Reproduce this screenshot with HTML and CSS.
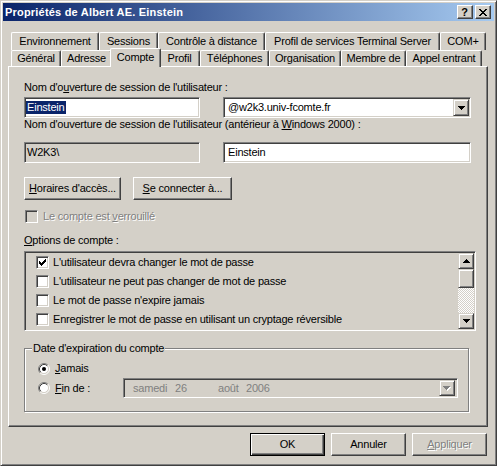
FILE: index.html
```html
<!DOCTYPE html>
<html lang="fr">
<head>
<meta charset="utf-8">
<title>Propriétés de Albert AE. Einstein</title>
<link rel="stylesheet" href="styles.css">
</head>
<body>
<div class="window">
  <div class="titlebar">
    <div class="title">Propriétés de Albert AE. Einstein</div>
    <div class="capbtns">
      <div class="capbtn help">?</div>
      <div class="capbtn close">
        <svg width="8" height="7" viewBox="0 0 8 7" shape-rendering="crispEdges"><path d="M0 0h2v1h-2z M6 0h2v1h-2z M1 1h2v1h-2z M5 1h2v1h-2z M2 2h4v1h-4z M3 3h2v1h-2z M2 4h4v1h-4z M1 5h2v1h-2z M5 5h2v1h-2z M0 6h2v1h-2z M6 6h2v1h-2z" fill="#000"/></svg>
      </div>
    </div>
  </div>

  <div class="client">
    <div class="tabs">
      <div class="tabrow back">
        <div class="tab t-env">Environnement</div>
        <div class="tab t-ses">Sessions</div>
        <div class="tab t-ctl">Contrôle à distance</div>
        <div class="tab t-pts">Profil de services Terminal Server</div>
        <div class="tab t-com">COM+</div>
      </div>
      <div class="tabrow front">
        <div class="tab t-gen">Général</div>
        <div class="tab t-adr">Adresse</div>
        <div class="tab t-cpt sel">Compte</div>
        <div class="tab t-pro">Profil</div>
        <div class="tab t-tel">Téléphones</div>
        <div class="tab t-org">Organisation</div>
        <div class="tab t-mem">Membre de</div>
        <div class="tab t-app">Appel entrant</div>
      </div>
    </div>

    <div class="panel">
      <div class="label l1">Nom d'o<u>u</u>verture de session de l'utilisateur :</div>
      <div class="fieldrow r1">
        <div class="edit short"><span class="hl">Einstein</span></div>
        <div class="edit long combo">
          <span class="val">@w2k3.univ-fcomte.fr</span>
          <span class="ddbtn">
            <svg width="7" height="4" viewBox="0 0 7 4" shape-rendering="crispEdges"><path d="M0 0h7v1h-1v1h-1v1h-1v1h-1v-1h-1v-1h-1v-1h-1z" fill="#000"/></svg>
          </span>
        </div>
      </div>
      <div class="label l2">Nom d'ouverture de session de l'utilisateur (antérieur à <u>W</u>indows 2000) :</div>
      <div class="fieldrow r2">
        <div class="edit short ro">W2K3\</div>
        <div class="edit long">Einstein</div>
      </div>

      <div class="btnrow">
        <div class="btn b-hor"><span><u>H</u>oraires d'accès...</span></div>
        <div class="btn b-con"><span><u>S</u>e connecter à...</span></div>
      </div>

      <div class="check locked">
        <span class="cb off"></span>
        <span class="dis">Le compte est <u>v</u>errouillé</span>
      </div>

      <div class="label l3"><u>O</u>ptions de compte :</div>

      <div class="listbox">
        <div class="items">
          <div class="item">
            <span class="cb"><svg width="7" height="7" viewBox="0 0 7 7" shape-rendering="crispEdges"><path d="M0 2h1v3h-1z M1 3h1v3h-1z M2 4h1v3h-1z M3 3h1v3h-1z M4 2h1v3h-1z M5 1h1v3h-1z M6 0h1v3h-1z" fill="#000"/></svg></span>
            <span>L'utilisateur devra changer le mot de passe</span>
          </div>
          <div class="item"><span class="cb"></span><span>L'utilisateur ne peut pas changer de mot de passe</span></div>
          <div class="item"><span class="cb"></span><span>Le mot de passe n'expire jamais</span></div>
          <div class="item"><span class="cb"></span><span>Enregistrer le mot de passe en utilisant un cryptage réversible</span></div>
        </div>
        <div class="vscroll">
          <div class="sbtn">
            <svg width="7" height="4" viewBox="0 0 7 4" shape-rendering="crispEdges"><path d="M3 0h1v1h1v1h1v1h1v1h-7v-1h1v-1h1v-1h1z" fill="#000"/></svg>
          </div>
          <div class="thumb"></div>
          <div class="track"></div>
          <div class="sbtn">
            <svg width="7" height="4" viewBox="0 0 7 4" shape-rendering="crispEdges"><path d="M0 0h7v1h-1v1h-1v1h-1v1h-1v-1h-1v-1h-1v-1h-1z" fill="#000"/></svg>
          </div>
        </div>
      </div>

      <fieldset class="group">
        <legend>Date d'expiration du compte</legend>
        <div class="radiorow first">
          <svg class="radio" width="12" height="12" viewBox="0 0 12 12">
            <circle cx="6" cy="6" r="4.5" fill="#fff"/>
            <path d="M2.11 9.89A5.5 5.5 0 0 1 9.89 2.11" fill="none" stroke="#808080"/>
            <path d="M9.89 2.11A5.5 5.5 0 0 1 2.11 9.89" fill="none" stroke="#fff"/>
            <path d="M2.82 9.18A4.5 4.5 0 0 1 9.18 2.82" fill="none" stroke="#404040"/>
            <path d="M9.18 2.82A4.5 4.5 0 0 1 2.82 9.18" fill="none" stroke="#D4D0C8"/>
            <circle cx="6" cy="6" r="2" fill="#000"/>
          </svg>
          <span><u>J</u>amais</span>
        </div>
        <div class="radiorow second">
          <svg class="radio" width="12" height="12" viewBox="0 0 12 12">
            <circle cx="6" cy="6" r="4.5" fill="#fff"/>
            <path d="M2.11 9.89A5.5 5.5 0 0 1 9.89 2.11" fill="none" stroke="#808080"/>
            <path d="M9.89 2.11A5.5 5.5 0 0 1 2.11 9.89" fill="none" stroke="#fff"/>
            <path d="M2.82 9.18A4.5 4.5 0 0 1 9.18 2.82" fill="none" stroke="#404040"/>
            <path d="M9.18 2.82A4.5 4.5 0 0 1 2.82 9.18" fill="none" stroke="#D4D0C8"/>
          </svg>
          <span class="finde"><u>F</u>in de :</span>
          <div class="datepick">
            <span class="d-day">samedi</span>
            <span class="d-num">26</span>
            <span class="d-mon">août</span>
            <span class="d-yr">2006</span>
            <span class="ddbtn dd-dis">
              <svg width="8" height="5" viewBox="0 0 8 5" shape-rendering="crispEdges"><path d="M1 1h7v1h-1v1h-1v1h-1v1h-1v-1h-1v-1h-1v-1h-1z" fill="#fff"/><path d="M0 0h7v1h-1v1h-1v1h-1v1h-1v-1h-1v-1h-1v-1h-1z" fill="#808080"/></svg>
            </span>
          </div>
        </div>
      </fieldset>
    </div>

    <div class="dlgbtns">
      <div class="btn dlg default">OK</div>
      <div class="btn dlg">Annuler</div>
      <div class="btn dlg"><span class="dis"><u>A</u>ppliquer</span></div>
    </div>
  </div>
</div>
</body>
</html>
```

FILE: styles.css
```css
* { box-sizing: border-box; }

html, body {
  margin: 0;
  padding: 0;
}

body {
  width: 497px;
  height: 466px;
  overflow: hidden;
  background: #D4D0C8;
  font-family: "Liberation Sans", Arial, sans-serif;
  font-size: 11px;
  line-height: 13px;
  letter-spacing: -0.2px;
  color: #000;
}

u { text-decoration: underline; text-underline-offset: 1px; }

/* ---------- window frame ---------- */
.window {
  width: 497px;
  height: 466px;
  border: 1px solid;
  border-color: #D4D0C8 #404040 #404040 #D4D0C8;
  box-shadow: inset 1px 1px 0 #fff, inset -1px -1px 0 #808080;
  padding: 2px;
  display: flex;
  flex-direction: column;
}

.titlebar {
  height: 18px;
  flex: none;
  display: flex;
  align-items: center;
  padding: 0 3px 0 2px;
  background: linear-gradient(to right, #0A246A, #A6CAF0);
  color: #fff;
  font-weight: bold;
  letter-spacing: 0.2px;
}

.title { flex: 1; white-space: nowrap; }

.capbtns { display: flex; gap: 2px; }

.capbtn {
  width: 16px;
  height: 14px;
  background: #D4D0C8;
  border: 1px solid;
  border-color: #fff #404040 #404040 #fff;
  box-shadow: inset -1px -1px 0 #808080;
  display: flex;
  align-items: center;
  justify-content: center;
  color: #000;
  font-weight: bold;
  font-size: 11px;
  line-height: 11px;
  letter-spacing: 0;
}

.capbtn.help { padding: 0 1px 0 0; }
.capbtn.close svg { display: block; margin-left: -1px; }

/* ---------- client area ---------- */
.client {
  flex: 1;
  display: flex;
  flex-direction: column;
  padding: 11px 0 0 5px;
}

.tabs {
  position: relative;
  z-index: 1;
  margin-left: 3px;
  width: 475px;
  display: flex;
  flex-direction: column;
}

.tabrow { display: flex; }
.tabrow.back { height: 18px; }
.tabrow.front { height: 16px; align-items: flex-end; }

.tab {
  flex: none;
  height: 18px;
  display: flex;
  align-items: center;
  justify-content: center;
  white-space: nowrap;
  background: #D4D0C8;
  border-top: 1px solid #fff;
  border-left: 1px solid #fff;
  border-right: 1px solid #404040;
  border-radius: 2px 2px 0 0;
  box-shadow: inset -1px 0 0 #808080;
}

.tabrow.front .tab { height: 16px; }

.tabrow.front .tab.sel {
  position: relative;
  z-index: 2;
  height: 19px;
  margin: 0 -2px -1px;
  padding-bottom: 2px;
}

.t-env { width: 88px; }
.t-ses { width: 59px; }
.t-ctl { width: 107px; }
.t-pts { width: 175px; }
.t-com { width: 46px; }

.t-gen { width: 50px; }
.t-adr { width: 51px; }
.t-cpt { width: 51px; }
.t-pro { width: 41px; }
.t-tel { width: 69px; }
.t-org { width: 72px; }
.t-mem { width: 65px; }
.t-app { width: 76px; }

/* ---------- property page ---------- */
.panel {
  width: 480px;
  height: 361px;
  flex: none;
  border: 1px solid;
  border-color: #fff #404040 #404040 #fff;
  box-shadow: inset -1px -1px 0 #808080;
  padding: 0 0 0 15px;
  display: flex;
  flex-direction: column;
  align-items: flex-start;
}

.label { height: 13px; white-space: nowrap; }
.l1 { margin-top: 14px; }
.l2 { margin-top: 0; }
.l3 { margin-top: 11px; }

.fieldrow { display: flex; gap: 23px; }
.r1 { margin-top: 3px; }
.r2 { margin-top: 11px; }

.edit {
  height: 21px;
  border: 1px solid;
  border-color: #808080 #fff #fff #808080;
  box-shadow: inset 1px 1px 0 #404040, inset -1px -1px 0 #D4D0C8;
  background: #fff;
  display: flex;
  align-items: center;
  padding: 0 1px 0 2px;
  white-space: nowrap;
}

.edit.short { width: 176px; }
.edit.long { width: 248px; padding-left: 4px; }
.edit.ro { background: #D4D0C8; }

.hl {
  background: #0A246A;
  color: #fff;
  padding: 0 1px 0 1px;
  margin-left: -1px;
}

.combo { padding-right: 1px; }
.combo .val { flex: 1; }

.ddbtn {
  width: 16px;
  height: 17px;
  flex: none;
  background: #D4D0C8;
  border: 1px solid;
  border-color: #D4D0C8 #404040 #404040 #D4D0C8;
  box-shadow: inset 1px 1px 0 #fff, inset -1px -1px 0 #808080;
  display: flex;
  align-items: center;
  justify-content: center;
}

.ddbtn svg { display: block; }

/* ---------- push buttons ---------- */
.btnrow { display: flex; gap: 12px; margin-top: 14px; }

.btn {
  height: 23px;
  border: 1px solid;
  border-color: #fff #404040 #404040 #fff;
  box-shadow: inset -1px -1px 0 #808080;
  display: flex;
  align-items: center;
  justify-content: center;
  white-space: nowrap;
}

.b-hor { width: 97px; }
.b-con { width: 99px; }

.dis {
  color: #808080;
  text-shadow: 1px 1px 0 #fff;
}

/* ---------- checkboxes ---------- */
.cb {
  width: 13px;
  height: 13px;
  flex: none;
  border: 1px solid;
  border-color: #808080 #fff #fff #808080;
  box-shadow: inset 1px 1px 0 #404040, inset -1px -1px 0 #D4D0C8;
  background: #fff;
  display: flex;
  align-items: center;
  justify-content: center;
}

.cb svg { display: block; }
.cb.off { background: #D4D0C8; }

.check {
  display: flex;
  align-items: center;
  gap: 5px;
  height: 13px;
  margin-top: 10px;
  padding-left: 1px;
  white-space: nowrap;
}

/* ---------- list view ---------- */
.listbox {
  margin-top: 4px;
  width: 452px;
  height: 80px;
  border: 1px solid;
  border-color: #808080 #fff #fff #808080;
  box-shadow: inset 1px 1px 0 #404040, inset -1px -1px 0 #D4D0C8;
  padding: 1px;
  display: flex;
}

.items {
  flex: 1;
  padding-left: 10px;
  display: flex;
  flex-direction: column;
}

.item {
  height: 19px;
  display: flex;
  align-items: center;
  gap: 4px;
  white-space: nowrap;
}

.vscroll {
  width: 16px;
  flex: none;
  display: flex;
  flex-direction: column;
}

.sbtn, .thumb {
  background: #D4D0C8;
  border: 1px solid;
  border-color: #D4D0C8 #404040 #404040 #D4D0C8;
  box-shadow: inset 1px 1px 0 #fff, inset -1px -1px 0 #808080;
}

.sbtn {
  height: 16px;
  flex: none;
  display: flex;
  align-items: center;
  justify-content: center;
}

.sbtn svg { display: block; }

.thumb { height: 19px; flex: none; }

.track {
  flex: 1;
  background: repeating-conic-gradient(#fff 0 25%, #D4D0C8 0 50%) 0 0 / 2px 2px;
}

/* ---------- group box ---------- */
.group {
  margin: 11px 0 0 0;
  padding: 0 0 13px 7px;
  width: 445px;
  min-inline-size: 0;
  border: 1px solid #808080;
  box-shadow: inset 1px 1px 0 #fff, 1px 1px 0 #fff;
}

.group legend {
  padding: 0 1px;
  line-height: 13px;
  background: #D4D0C8;
  white-space: nowrap;
}

.radiorow {
  display: flex;
  align-items: center;
  margin-left: 6px;
  white-space: nowrap;
}

.radiorow.first { height: 13px; margin-top: 7px; }
.radiorow.second { height: 20px; margin-top: 3px; }

.radio { display: block; flex: none; margin-right: 5px; }

.finde { width: 68px; }

.datepick {
  width: 335px;
  height: 20px;
  border: 1px solid;
  border-color: #808080 #fff #fff #808080;
  box-shadow: inset 1px 1px 0 #404040, inset -1px -1px 0 #D4D0C8;
  background: #D4D0C8;
  display: flex;
  align-items: center;
  padding: 0 2px 0 9px;
  color: #808080;
}

.d-day { width: 42px; }
.d-num { width: 43px; }
.d-mon { width: 28px; }
.d-yr { flex: 1; }

.dd-dis { width: 16px; height: 16px; }

/* ---------- dialog buttons ---------- */
.dlgbtns {
  display: flex;
  justify-content: flex-end;
  gap: 6px;
  width: 480px;
  margin-top: 6px;
  padding-right: 1px;
}

.btn.dlg { width: 75px; }

.btn.default {
  border-color: #000;
  box-shadow: inset 1px 1px 0 #fff, inset -1px -1px 0 #404040, inset -2px -2px 0 #808080;
}
```
